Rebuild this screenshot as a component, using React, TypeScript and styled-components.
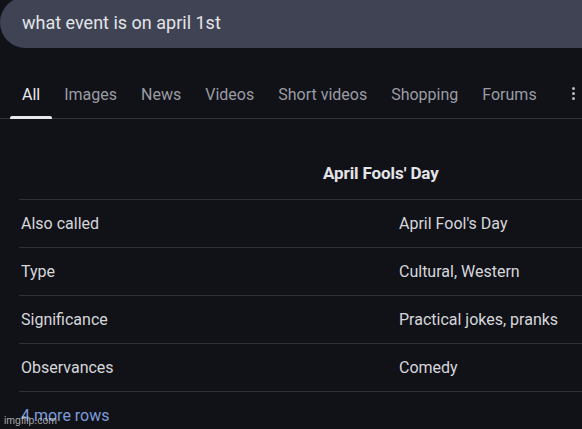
import React from "react";
import styled, { createGlobalStyle } from "styled-components";

const GlobalStyle = createGlobalStyle`
  html, body {
    margin: 0;
    padding: 0;
    background: #111218;
    overflow: hidden;
  }
  body {
    font-family: Roboto, "Liberation Sans", Arial, sans-serif;
    color: #dcdde1;
  }
`;

type Row = { label: string; value: string };

const rows: Row[] = [
  { label: "Also called", value: "April Fool's Day" },
  { label: "Type", value: "Cultural, Western" },
  { label: "Significance", value: "Practical jokes, pranks" },
  { label: "Observances", value: "Comedy" },
];

const tabs = ["All", "Images", "News", "Videos", "Short videos", "Shopping", "Forums"];

const App = () => {
  return (
    <>
      <GlobalStyle />
      <Page>
        <SearchBar>
          <Query>what event is on april 1st</Query>
        </SearchBar>
        <TabBar>
          {tabs.map((t, i) => (
            <Tab key={t} active={i === 0}>
              {t}
            </Tab>
          ))}
          <MoreDots>
            <span />
            <span />
            <span />
          </MoreDots>
        </TabBar>
        <InfoTable>
          <TableTitle>April Fools' Day</TableTitle>
          {rows.map((r) => (
            <TableRow key={r.label}>
              <Cell>{r.label}</Cell>
              <Cell>{r.value}</Cell>
            </TableRow>
          ))}
          <MoreRows>4 more rows</MoreRows>
        </InfoTable>
        <Watermark>imgflip.com</Watermark>
      </Page>
    </>
  );
};

export default App;

const Page = styled.div`
  position: relative;
  width: 582px;
  height: 429px;
  overflow: hidden;
`;

const SearchBar = styled.div`
  display: flex;
  align-items: center;
  width: 640px;
  height: 51px;
  margin-top: -3px;
  padding-left: 22px;
  box-sizing: border-box;
  background: #3f4354;
  border-radius: 26px 0 0 26px;
`;

const Query = styled.span`
  font-size: 18px;
  color: #e3e4e8;
`;

const TabBar = styled.div`
  display: flex;
  align-items: flex-end;
  height: 70px;
  padding-left: 10px;
  border-bottom: 1px solid #33353b;
`;

const Tab = styled.div<{ active?: boolean }>`
  position: relative;
  height: 48px;
  display: flex;
  align-items: center;
  padding: 0 12px;
  font-size: 16px;
  color: ${(p) => (p.active ? "#e8e9ec" : "#9a9ca3")};

  &::after {
    content: "";
    display: ${(p) => (p.active ? "block" : "none")};
    position: absolute;
    left: 0;
    right: 0;
    bottom: -1px;
    height: 3px;
    background: #e8e9ec;
    border-radius: 2px 2px 0 0;
  }
`;

const MoreDots = styled.div`
  margin: 0 7px 18px auto;
  display: flex;
  flex-direction: column;
  gap: 2px;

  span {
    width: 3px;
    height: 3px;
    border-radius: 50%;
    background: #b8bac0;
  }
`;

const InfoTable = styled.div`
  margin-left: 19px;
  display: flex;
  flex-direction: column;
`;

const TableTitle = styled.div`
  height: 81px;
  display: flex;
  align-items: center;
  padding-left: 304px;
  padding-top: 28px;
  box-sizing: border-box;
  font-size: 17px;
  font-weight: 700;
  letter-spacing: -0.1px;
  color: #e3e4e8;
  border-bottom: 1px solid #2f3137;
`;

const TableRow = styled.div`
  display: grid;
  grid-template-columns: 378px 1fr;
  align-items: center;
  height: 48px;
  box-sizing: border-box;
  border-bottom: 1px solid #2f3137;
`;

const Cell = styled.div`
  padding-left: 2px;
  font-size: 16px;
  color: #d6d7db;
`;

const MoreRows = styled.div`
  padding: 14px 0 0 2px;
  font-size: 16px;
  color: #7b9bd8;
`;

const Watermark = styled.div`
  position: absolute;
  left: 4px;
  bottom: 3px;
  font-family: "Liberation Sans", Arial, sans-serif;
  font-size: 10.5px;
  color: rgba(220, 220, 220, 0.75);
`;
